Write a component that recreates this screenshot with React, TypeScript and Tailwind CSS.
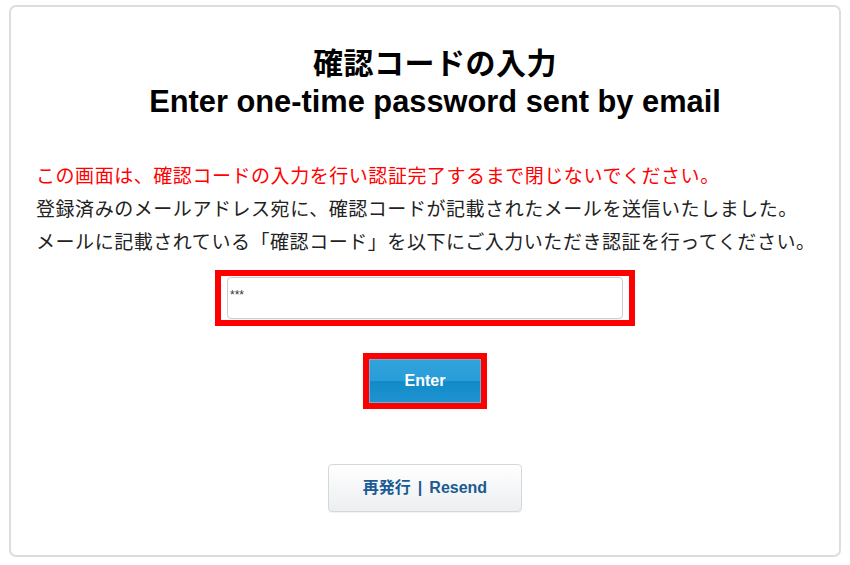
import React from 'react';

const font = { fontFamily: '"Liberation Sans", "Noto Sans CJK JP", sans-serif' };

export default function App() {
  return (
    <div
      className="w-[850px] h-[565px] bg-white pt-[5px] pb-[8px] px-[9px]"
      style={font}
    >
      <div className="h-full border-2 border-[#dddddd] rounded-[7px] pt-[38px] px-[25px] flex flex-col">
        <div className="pl-[20px]">
          <h1 className="text-center font-bold text-[30px] leading-[38px] text-black tracking-[0.5px]">
            確認コードの入力
          </h1>
          <h2 className="text-center font-bold text-[30.8px] leading-[38px] text-black">
            Enter one-time password sent by email
          </h2>
        </div>

        <div className="mt-[39px] text-[19px] leading-[33px] text-[#222222] tracking-[0.55px] whitespace-nowrap">
          <p className="text-[#ff0000]">
            この画面は、確認コードの入力を行い認証完了するまで閉じないでください。
          </p>
          <p>登録済みのメールアドレス宛に、確認コードが記載されたメールを送信いたしました。</p>
          <p>メールに記載されている「確認コード」を以下にご入力いただき認証を行ってください。</p>
        </div>

        <div className="mt-[11px] self-center w-[420px] border-[6px] border-[#ff0000] bg-white px-[6px] py-[1px]">
          <input
            type="text"
            defaultValue="***"
            className="block w-full h-[42px] border border-[#cccccc] rounded-[4px] px-[2px] pb-[7px] text-[12px] text-[#333333] outline-none"
          />
        </div>

        <div className="mt-[27px] self-center border-[6px] border-[#ff0000]">
          <button className="block w-[112px] h-[44px] bg-[linear-gradient(#30a2dc_0%,#2a9dd8_50%,#128ac9_50%,#1f93d0_100%)] text-white font-bold text-[16px] border border-[#5bb6e6]">
            Enter
          </button>
        </div>

        <div className="mt-[55px] self-center">
          <button className="w-[194px] h-[48px] rounded-[4px] border border-[#d5d8db] bg-[linear-gradient(#ffffff,#eceef0)] text-[#1b5b94] font-bold text-[16px] shadow-[0_1px_1px_rgba(0,0,0,0.05)]">
            再発行<span className="mx-[7px]">|</span>Resend
          </button>
        </div>
      </div>
    </div>
  );
}
